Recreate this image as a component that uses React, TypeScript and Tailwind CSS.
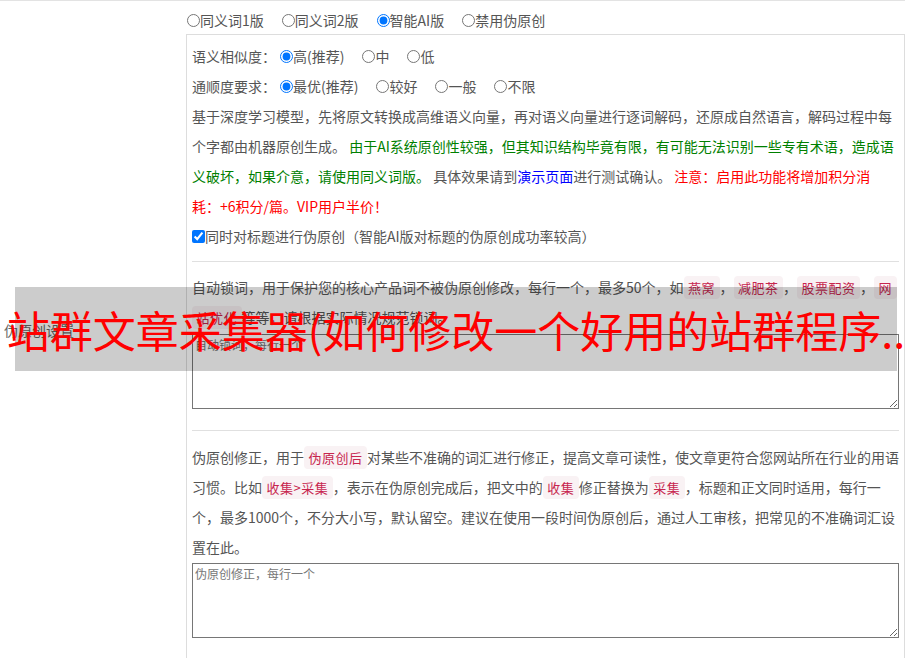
import type { ReactNode } from 'react'

function Code({ children }: { children: ReactNode }) {
  return (
    <span className="rounded-[4px] bg-[#f9f2f4] px-[4.5px] py-[2px] align-baseline text-[13px] leading-[16px] tracking-[0.5px] text-[#c7254e]">
      {children}
    </span>
  )
}

function Radio({ name, label, checked }: { name: string; label: string; checked?: boolean }) {
  return (
    <label className="mr-[18px] inline-flex items-center">
      <input type="radio" name={name} defaultChecked={checked} className="m-0 h-[13px] w-[13px]" />
      <span>{label}</span>
    </label>
  )
}

export default function App() {
  return (
    <div className="relative h-[658px] w-[911px] overflow-hidden bg-white font-['Noto_Sans_CJK_SC',sans-serif] text-[14px] text-[#555]">
      <div className="flex w-[905px] border-t border-[#e3e3e3]">
        {/* label column */}
        <div className="flex w-[186px] shrink-0 items-center pl-1 text-[#666]">伪原创设置</div>

        <div className="w-[719px] shrink-0 pt-[9px]">
          <div className="flex h-[20px] items-center pl-px">
            <Radio name="mode" label="同义词1版" />
            <Radio name="mode" label="同义词2版" />
            <Radio name="mode" label="智能AI版" checked />
            <Radio name="mode" label="禁用伪原创" />
          </div>

          <div className="mt-[4px] border border-[#ddd] px-[5px] pb-[21px] pt-[6px]">
            <div className="flex h-[30px] items-center">
              <span className="mr-[4px]">语义相似度：</span>
              <Radio name="sim" label="高(推荐)" checked />
              <Radio name="sim" label="中" />
              <Radio name="sim" label="低" />
            </div>
            <div className="flex h-[30px] items-center">
              <span className="mr-[4px]">通顺度要求：</span>
              <Radio name="flu" label="最优(推荐)" checked />
              <Radio name="flu" label="较好" />
              <Radio name="flu" label="一般" />
              <Radio name="flu" label="不限" />
            </div>

            <p className="whitespace-nowrap leading-[30px]">
              基于深度学习模型，先将原文转换成高维语义向量，再对语义向量进行逐词解码，还原成自然语言，解码过程中每
              <br />
              个字都由机器原创生成。{' '}
              <span className="text-[#008000]">
                由于AI系统原创性较强，但其知识结构毕竟有限，有可能无法识别一些专有术语，造成语
                <br />
                义破坏，如果介意，请使用同义词版。
              </span>{' '}
              具体效果请到<a className="text-[#0000ff]">演示页面</a>进行测试确认。{' '}
              <span className="text-[#ff0000]">
                注意：启用此功能将增加积分消
                <br />
                耗：+6积分/篇。VIP用户半价！
              </span>
            </p>

            <label className="flex h-[30px] items-center">
              <input type="checkbox" defaultChecked className="m-0 h-[13px] w-[13px]" />
              <span>同时对标题进行伪原创（智能AI版对标题的伪原创成功率较高）</span>
            </label>

            <div className="mt-[10px] h-px bg-[#e0e0e0]" />

            <p className="mt-[10px] whitespace-nowrap leading-[30px]">
              自动锁词，用于保护您的核心产品词不被伪原创修改，每行一个，最多50个，如<Code>燕窝</Code>，<Code>减肥茶</Code>，<Code>股票配资</Code>，<Code>网</Code>
              <br />
              <Code>站优化</Code>等等，请根据实际情况规范锁词。
            </p>
            <textarea
              placeholder="自动锁词，每行一个"
              className="mt-[2px] block h-[75px] w-full border border-[#767676] p-[2px] text-[12px] leading-[16px] placeholder:text-[#777]"
            />

            <div className="mt-[21px] h-px bg-[#e0e0e0]" />

            <p className="mt-[11px] whitespace-nowrap leading-[30px]">
              伪原创修正，用于<Code>伪原创后</Code>对某些不准确的词汇进行修正，提高文章可读性，使文章更符合您网站所在行业的用语
              <br />
              习惯。比如<Code>收集&gt;采集</Code>，表示在伪原创完成后，把文中的<Code>收集</Code>修正替换为<Code>采集</Code>，标题和正文同时适用，每行一
              <br />
              个，最多1000个，不分大小写，默认留空。建议在使用一段时间伪原创后，通过人工审核，把常见的不准确词汇设
              <br />
              置在此。
            </p>
            <textarea
              placeholder="伪原创修正，每行一个"
              className="mt-[1px] block h-[75px] w-full border border-[#767676] p-[2px] text-[12px] leading-[16px] placeholder:text-[#777]"
            />
          </div>
        </div>
      </div>

      {/* title banner laid over the form */}
      <div className="absolute left-[15px] top-[287px] flex h-[84px] w-[882px] items-center justify-center bg-black/20">
        <span className="whitespace-nowrap text-[43px] leading-none text-[#ff0000]">
          站群文章采集器(如何修改一个好用的站群程序..
        </span>
      </div>
    </div>
  )
}
